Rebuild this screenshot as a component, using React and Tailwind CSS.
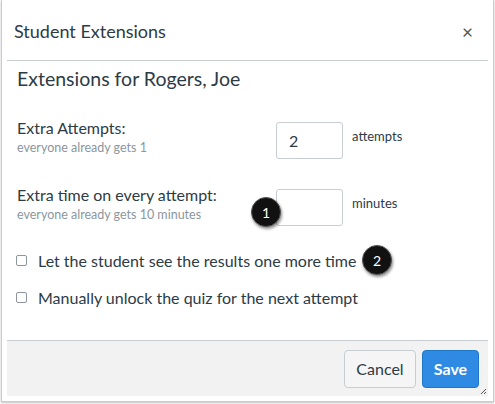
import React from "react";

const font = { fontFamily: "Lato, 'Open Sans', Arial, sans-serif" };

function Badge({ n, className }) {
  return (
    <div
      className={`absolute flex h-[30px] w-[30px] items-center justify-center rounded-full border border-[#555] bg-[#111] text-[14px] text-white shadow-[1px_2px_3px_rgba(0,0,0,0.45)] ${className}`}
    >
      {n}
    </div>
  );
}

function Checkbox() {
  return <span className="inline-block h-[11px] w-[11px] shrink-0 rounded-[2px] border border-[#8d959f] bg-white" />;
}

export default function App() {
  return (
    <div className="relative h-[404px] w-[495px] bg-white text-[#2d3b45]" style={font}>
      <div className="ml-[1px] flex h-[402px] w-[493px] flex-col border-x border-b border-[#c7cdd1] px-[5px] pb-[5px] shadow-[0_1px_2px_rgba(0,0,0,0.25)]">
        {/* header */}
        <div className="flex h-[61px] shrink-0 items-center justify-between border-b border-[#c7cdd1] pl-[7px] pr-[15px] pt-[2px]">
          <h2 className="text-[18px] leading-none">Student Extensions</h2>
          <span className="text-[19px] leading-none text-[#555]">×</span>
        </div>

        {/* body */}
        <div className="relative flex-1 pl-[10px] pt-[6px]">
          <h3 className="text-[19.5px] leading-[24px]">Extensions for Rogers, Joe</h3>

          <div className="mt-[27px] flex items-start">
            <div className="w-[259px]">
              <div className="text-[16px] leading-[20px]">Extra Attempts:</div>
              <div className="mt-[2px] text-[12.5px] leading-[16px] text-[#8b969e]">everyone already gets 1</div>
            </div>
            <div className="mt-[4px] flex h-[37px] w-[67px] items-center rounded-[3px] border border-[#c7cdd1] pl-[12px] text-[16px]">2</div>
            <span className="ml-[9px] mt-[12px] text-[13px] leading-none">attempts</span>
          </div>

          <div className="mt-[26px] flex items-start">
            <div className="w-[259px]">
              <div className="text-[16px] leading-[20px]">Extra time on every attempt:</div>
              <div className="mt-[2px] text-[12.5px] leading-[16px] text-[#8b969e]">everyone already gets 10 minutes</div>
            </div>
            <div className="mt-[4px] h-[37px] w-[67px] rounded-[3px] border border-[#c7cdd1]" />
            <span className="ml-[9px] mt-[12px] text-[13px] leading-none">minutes</span>
          </div>

          <div className="-ml-[1px] mt-[25px] flex flex-col gap-[18px]">
            <label className="flex items-center gap-[11px] text-[16px] leading-[19px]">
              <Checkbox />
              Let the student see the results one more time
            </label>
            <label className="flex items-center gap-[11px] text-[16px] leading-[19px]">
              <Checkbox />
              Manually unlock the quiz for the next attempt
            </label>
          </div>

          <Badge n="1" className="left-[244px] top-[136px]" />
          <Badge n="2" className="left-[355px] top-[184px]" />
        </div>

        {/* footer */}
        <div className="relative flex h-[56px] shrink-0 items-center justify-end gap-[6px] border-t border-[#c7cdd1] bg-[#f2f2f2] pr-[9px]">
          <button className="h-[38px] w-[72px] rounded-[4px] border border-[#c7cdd1] bg-[#f5f5f5] text-[16px] text-[#2d3b45]">Cancel</button>
          <button className="h-[38px] w-[57px] rounded-[4px] border border-[#1f77c9] bg-[#2e8ae3] text-[16px] font-bold text-white">Save</button>
          <svg className="absolute bottom-[1px] right-[1px]" width="7" height="7" viewBox="0 0 7 7">
            <path d="M6 1 L1 6 M6 4 L4 6" stroke="#555" strokeWidth="1" />
          </svg>
        </div>
      </div>
    </div>
  );
}
